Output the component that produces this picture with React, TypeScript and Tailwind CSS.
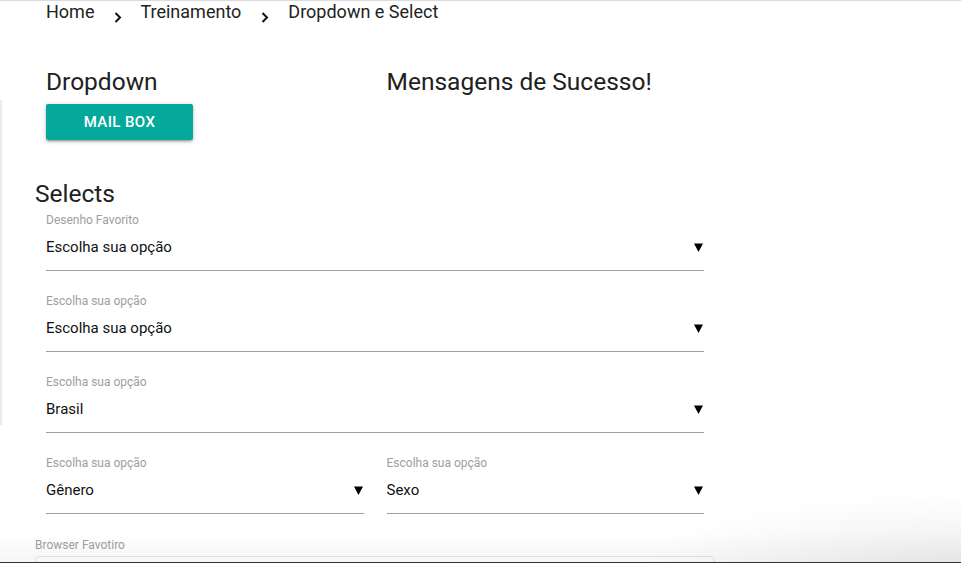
import React from "react";

function Chevron() {
  return (
    <svg width="8" height="11" viewBox="0 0 8 11" className="mt-[12px] shrink-0">
      <path d="M1.5 1 L6 5.5 L1.5 10" fill="none" stroke="#111" strokeWidth="2" />
    </svg>
  );
}

function Arrow() {
  return (
    <svg width="9" height="9" viewBox="0 0 9 9" className="shrink-0">
      <polygon points="0,0.5 9,0.5 4.5,9" fill="#000" />
    </svg>
  );
}

function SelectField({ label, value }: { label: string; value: string }) {
  return (
    <div className="flex flex-col">
      <div className="text-[12px] leading-[16px] text-[#9e9e9e]">{label}</div>
      <div className="mt-[7px] flex items-center justify-between border-b border-[#9e9e9e] pb-[11px] pr-[1px]">
        <span className="text-[15px] leading-[24px] text-[#111]">{value}</span>
        <Arrow />
      </div>
    </div>
  );
}

export default function App() {
  return (
    <div className="relative h-[563px] w-[961px] overflow-hidden bg-white font-['Roboto',sans-serif] text-[#212121]">
      <div className="h-[2px] border-t border-[#dcdcdc]" />
      {/* breadcrumb */}
      <div className="-mt-[2px] flex h-[24px] items-start pl-[46px] text-[18px] leading-[24px] text-[#222]">
        <span>Home</span>
        <span className="ml-[20px] mr-[18px] flex"><Chevron /></span>
        <span>Treinamento</span>
        <span className="ml-[20px] mr-[19px] flex"><Chevron /></span>
        <span>Dropdown e Select</span>
      </div>

      {/* dropdown row */}
      <div className="mt-[42px] grid w-[704px] grid-cols-2 gap-[23px] pl-[46px]">
        <div className="flex flex-col">
          <h2 className="text-[24.5px] leading-[32px]">Dropdown</h2>
          <button className="mt-[6px] h-[36px] w-[147px] rounded-[2px] bg-[#04a99b] text-[15px] font-medium tracking-[0.4px] text-white shadow-[0_2px_2px_0_rgba(0,0,0,0.14),0_3px_1px_-2px_rgba(0,0,0,0.12),0_1px_5px_0_rgba(0,0,0,0.2)]">
            MAIL BOX
          </button>
        </div>
        <div>
          <h2 className="text-[24.5px] leading-[32px]">Mensagens de Sucesso!</h2>
        </div>
      </div>

      {/* selects */}
      <div className="mt-[38px] pl-[35px]">
        <h2 className="text-[24.5px] leading-[32px]">Selects</h2>
        <div className="mt-[2px] flex w-[669px] flex-col gap-[22px] pl-[11px]">
          <SelectField label="Desenho Favorito" value="Escolha sua opção" />
          <SelectField label="Escolha sua opção" value="Escolha sua opção" />
          <SelectField label="Escolha sua opção" value="Brasil" />
          <div className="grid grid-cols-2 gap-[23px]">
            <SelectField label="Escolha sua opção" value="Gênero" />
            <SelectField label="Escolha sua opção" value="Sexo" />
          </div>
        </div>
        <div className="mt-[23px] text-[12px] leading-[16px] text-[#9e9e9e]">Browser Favotiro</div>
        <div className="mt-[3px] h-[30px] w-[680px] rounded-[4px] border border-[#e6e6e6]" />
      </div>

      {/* decorative shadows */}
      <div className="pointer-events-none absolute left-0 top-[100px] h-[325px] w-[3px] bg-gradient-to-r from-[#e4e4e4] to-transparent" />
      <div className="pointer-events-none absolute inset-x-0 bottom-[1px] h-[30px] bg-gradient-to-b from-transparent to-black/[0.035]" />
      <div className="pointer-events-none absolute bottom-[1px] right-0 h-[70px] w-[320px] bg-[radial-gradient(ellipse_at_bottom_right,rgba(0,0,0,0.07),transparent_70%)]" />
      <div className="absolute inset-x-0 bottom-0 h-[1px] bg-[#333]" />
    </div>
  );
}
